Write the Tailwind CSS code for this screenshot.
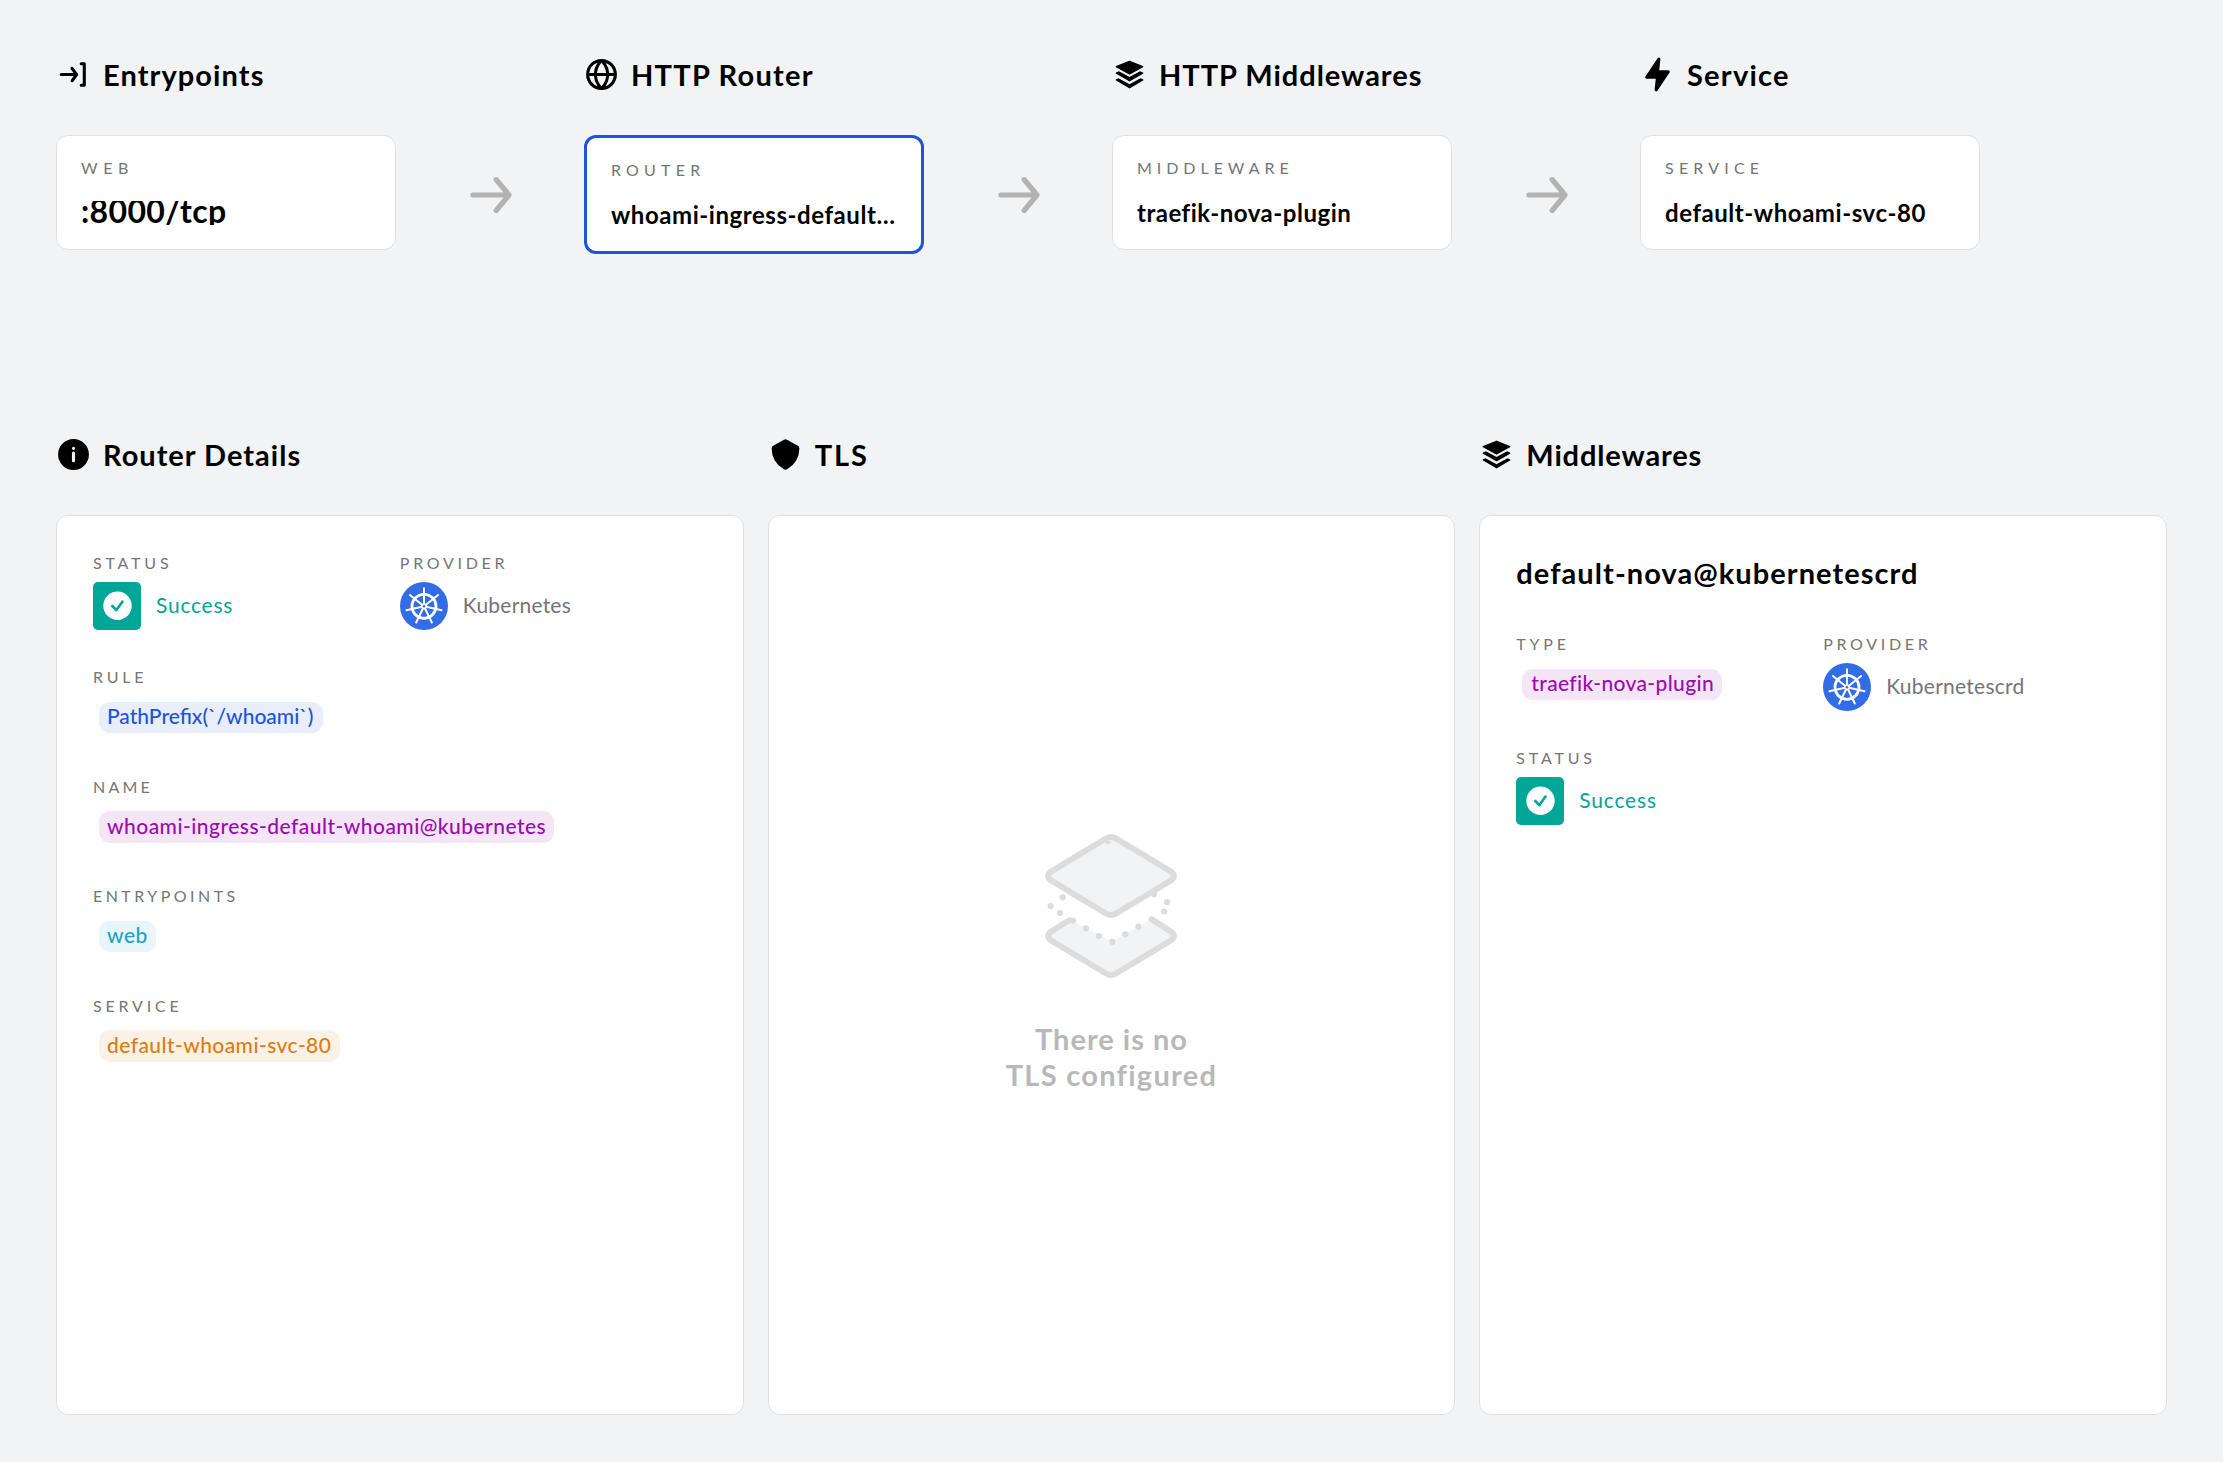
<!DOCTYPE html>
<html lang="en">
<head>
<meta charset="utf-8">
<title>Router whoami-ingress-default-whoami@kubernetes</title>
<script src="https://cdn.jsdelivr.net/npm/@tailwindcss/browser@4"></script>
</head>
<body class="bg-[#f1f3f5] font-['Lato','Liberation_Sans',sans-serif] text-black">
<svg class="hidden">
  <symbol id="arrow" viewBox="0 0 24 24"><path d="M5 13h11.86l-3.63 4.36a1 1 0 0 0 1.54 1.28l5-6a1.19 1.19 0 0 0 .09-.15c0-.05.05-.08.07-.13A1 1 0 0 0 20 12a1 1 0 0 0-.07-.36c0-.05-.05-.08-.07-.13a1.19 1.19 0 0 0-.09-.15l-5-6A1 1 0 0 0 14 5a1 1 0 0 0-.64.23 1 1 0 0 0-.13 1.41L16.86 11H5a1 1 0 0 0 0 2z"/></symbol>
  <symbol id="layers" viewBox="0 0 24 24"><path d="M3.24 7.29l8.52 4.63a.51.51 0 0 0 .48 0l8.52-4.63a.44.44 0 0 0-.05-.81L12.19 3a.5.5 0 0 0-.38 0L3.29 6.48a.44.44 0 0 0-.05.81z"/><path d="M20.71 10.66l-1.83-.78-6.64 3.61a.51.51 0 0 1-.48 0L5.12 9.88l-1.83.78a.48.48 0 0 0 0 .85l8.52 4.9a.46.46 0 0 0 .48 0l8.52-4.9a.48.48 0 0 0-.1-.85z"/><path d="M20.71 15.1l-1.56-.68-6.91 3.76a.51.51 0 0 1-.48 0l-6.91-3.76-1.56.68a.49.49 0 0 0 0 .87l8.52 5a.51.51 0 0 0 .48 0l8.52-5a.49.49 0 0 0-.1-.87z"/></symbol>
  <symbol id="check" viewBox="0 0 48 48"><rect width="48" height="48" rx="5" fill="#00a697"/><circle cx="24.5" cy="23.7" r="14.2" fill="#fff"/><path d="M19.3 24l4 4.2 6.2-8.6" fill="none" stroke="#00a697" stroke-width="2.6" stroke-linecap="round" stroke-linejoin="round"/></symbol>
  <symbol id="k8s" viewBox="0 0 48 48"><circle cx="24" cy="24" r="24" fill="#326de6"/><g fill="none" stroke="#fff" stroke-linecap="round"><circle cx="24" cy="24.3" r="12" stroke-width="2.8"/><circle cx="24" cy="24.3" r="2.4" fill="#fff" stroke-width="1.4"/><g stroke-width="2"><path d="M24 21V6.3"/><path d="M24 21V6.3" transform="rotate(51.43 24 24.3)"/><path d="M24 21V6.3" transform="rotate(102.86 24 24.3)"/><path d="M24 21V6.3" transform="rotate(154.29 24 24.3)"/><path d="M24 21V6.3" transform="rotate(205.71 24 24.3)"/><path d="M24 21V6.3" transform="rotate(257.14 24 24.3)"/><path d="M24 21V6.3" transform="rotate(308.57 24 24.3)"/></g></g><circle cx="24" cy="24.3" r="1.3" fill="#326de6"/></symbol>
</svg>

<main class="flex h-[1462px] w-[2223px] flex-col pt-[56px] pr-[56px] pl-[56px]">
  <!-- Request flow -->
  <section class="grid grid-cols-[528px_528px_528px_1fr]">
    <div>
      <h2 class="flex h-9 items-center gap-[11px] text-[29px] leading-9 font-bold tracking-[1.08px]">
        <svg class="mt-px -ml-px size-[37px]" viewBox="0 0 24 24"><path d="M19 4h-2a1 1 0 0 0 0 2h1v12h-1a1 1 0 0 0 0 2h2a1 1 0 0 0 1-1V5a1 1 0 0 0-1-1z"/><path d="M11.8 7.4a1 1 0 0 0-1.6 1.2L12 11H4a1 1 0 0 0 0 2h8.09l-1.72 2.44a1 1 0 0 0 .24 1.4 1 1 0 0 0 .58.18 1 1 0 0 0 .81-.42l2.82-4a1 1 0 0 0 0-1.18z"/></svg>
        <span class="pt-0.5">Entrypoints</span>
      </h2>
      <div class="mt-[43px] flex items-start">
        <div class="h-[115px] w-[340px] rounded-xl border border-[#dfe0e2] bg-white px-6 pt-[22px]">
          <div class="h-5 text-base leading-5 tracking-[5.6px] text-[#757575]">WEB</div>
          <div class="mt-[23px] h-6 overflow-hidden text-[32px] leading-5 font-bold tracking-[.36px] whitespace-nowrap">:8000/tcp</div>
        </div>
        <svg class="mt-[29px] ml-[64px] size-[62px] fill-[#b2b2b2]"><use href="#arrow"/></svg>
      </div>
    </div>
    <div>
      <h2 class="flex h-9 items-center gap-[11px] text-[29px] leading-9 font-bold tracking-[1.25px]">
        <svg class="mt-px -ml-px size-[37px]" viewBox="0 0 24 24"><path d="M22 12A10 10 0 0 0 12 2a10 10 0 0 0 0 20 10 10 0 0 0 10-10zm-2.07-1H17a12.91 12.91 0 0 0-2.33-6.54A8 8 0 0 1 19.93 11zM9.08 13H15a11.44 11.44 0 0 1-3 6.61A11 11 0 0 1 9.08 13zm0-2A11.4 11.4 0 0 1 12 4.4a11.19 11.19 0 0 1 3 6.6zm.36-6.57A13.18 13.18 0 0 0 7.07 11h-3a8 8 0 0 1 5.37-6.57zM4.07 13h3a12.86 12.86 0 0 0 2.35 6.56A8 8 0 0 1 4.07 13zm10.55 6.55A13.14 13.14 0 0 0 17 13h2.95a8 8 0 0 1-5.33 6.55z"/></svg>
        <span class="pt-0.5">HTTP Router</span>
      </h2>
      <div class="mt-[43px] flex items-start">
        <div class="h-[119px] w-[340px] rounded-xl border-3 border-[#1e54d9] bg-white px-6 pt-[22px]">
          <div class="h-5 text-base leading-5 tracking-[5.2px] text-[#757575]">ROUTER</div>
          <div class="mt-6 h-6 text-2xl leading-[22px] font-bold tracking-[.56px] whitespace-nowrap">whoami-ingress-default…</div>
        </div>
        <svg class="mt-[29px] ml-[64px] size-[62px] fill-[#b2b2b2]"><use href="#arrow"/></svg>
      </div>
    </div>
    <div>
      <h2 class="flex h-9 items-center gap-[11px] text-[29px] leading-9 font-bold tracking-[.98px]">
        <svg class="mt-px -ml-px size-[37px]"><use href="#layers"/></svg>
        <span class="pt-0.5">HTTP Middlewares</span>
      </h2>
      <div class="mt-[43px] flex items-start">
        <div class="h-[115px] w-[340px] rounded-xl border border-[#dfe0e2] bg-white px-6 pt-[22px]">
          <div class="h-5 text-base leading-5 tracking-[4.95px] text-[#757575]">MIDDLEWARE</div>
          <div class="mt-6 h-6 text-2xl leading-[22px] font-bold tracking-[.52px] whitespace-nowrap">traefik-nova-plugin</div>
        </div>
        <svg class="mt-[29px] ml-[64px] size-[62px] fill-[#b2b2b2]"><use href="#arrow"/></svg>
      </div>
    </div>
    <div>
      <h2 class="flex h-9 items-center gap-[11px] text-[29px] leading-9 font-bold tracking-[1.25px]">
        <svg class="mt-px -ml-px size-[37px]" viewBox="0 0 24 24"><path d="M11.11 23a1 1 0 0 1-.34-.06 1 1 0 0 1-.65-1.05l.77-7.09H5a1 1 0 0 1-.83-1.56l7.89-11.8a1 1 0 0 1 1.17-.38 1 1 0 0 1 .65 1l-.77 7.14H19a1 1 0 0 1 .83 1.56l-7.89 11.8a1 1 0 0 1-.83.44z"/></svg>
        <span class="pt-0.5">Service</span>
      </h2>
      <div class="mt-[43px] flex items-start">
        <div class="h-[115px] w-[340px] rounded-xl border border-[#dfe0e2] bg-white px-6 pt-[22px]">
          <div class="h-5 text-base leading-5 tracking-[5.2px] text-[#757575]">SERVICE</div>
          <div class="mt-6 h-6 text-2xl leading-[22px] font-bold tracking-[.56px] whitespace-nowrap">default-whoami-svc-80</div>
        </div>
      </div>
    </div>
  </section>

  <!-- Details -->
  <section class="mt-[182px] grid grid-cols-3 gap-6">
    <div>
      <h2 class="flex h-9 items-center gap-[11px] text-[29px] leading-9 font-bold tracking-[1px]">
        <svg class="mt-px -ml-px size-[37px]" viewBox="0 0 24 24"><path d="M12 2a10 10 0 1 0 10 10A10 10 0 0 0 12 2zm1 14a1 1 0 0 1-2 0v-5a1 1 0 0 1 2 0zm-1-7a1 1 0 1 1 1-1 1 1 0 0 1-1 1z"/></svg>
        <span class="pt-0.5">Router Details</span>
      </h2>
      <div class="mt-[43px] h-[900px] rounded-xl border border-[#dfe0e2] bg-white px-9 pt-[37px] text-[21px]">
        <div class="grid grid-cols-2">
          <div>
            <div class="h-5 text-base leading-5 tracking-[3.8px] text-[#757575]">STATUS</div>
            <div class="mt-[9px] flex items-center gap-[15px]">
              <svg class="size-12"><use href="#check"/></svg>
              <span class="pb-0.5 leading-7 tracking-[.75px] text-[#00a697]">Success</span>
            </div>
          </div>
          <div>
            <div class="h-5 text-base leading-5 tracking-[3.7px] text-[#757575]">PROVIDER</div>
            <div class="mt-[9px] flex items-center gap-[15px]">
              <svg class="size-12"><use href="#k8s"/></svg>
              <span class="pb-0.5 leading-7 tracking-[.22px] text-[#757575]">Kubernetes</span>
            </div>
          </div>
        </div>
        <div class="mt-[37px] h-[109.67px]">
          <div class="h-5 text-base leading-5 tracking-[3.8px] text-[#757575]">RULE</div>
          <div class="mt-[15px] ml-1.5 h-[31px] w-[224px] rounded-[11px] bg-[#e8eefb] pl-2 leading-7 font-medium tracking-[0px] whitespace-nowrap text-[#1e54d9]">PathPrefix(`/whoami`)</div>
        </div>
        <div class="h-[109.67px]">
          <div class="h-5 text-base leading-5 tracking-[3.2px] text-[#757575]">NAME</div>
          <div class="mt-[14.5px] ml-1.5 h-[31.5px] w-[455px] rounded-[11px] bg-[#f4e5f7] pl-2 leading-[29px] font-medium tracking-[.46px] whitespace-nowrap text-[#9c0bb0]">whoami-ingress-default-whoami@kubernetes</div>
        </div>
        <div class="h-[109.67px]">
          <div class="h-5 text-base leading-5 tracking-[3.45px] text-[#757575]">ENTRYPOINTS</div>
          <div class="mt-[14.5px] ml-1.5 h-[31.5px] w-[57px] rounded-[11px] bg-[#e8f5fa] pl-2 leading-7 font-medium tracking-[.5px] whitespace-nowrap text-[#1fa2c4]">web</div>
        </div>
        <div class="h-[109.67px]">
          <div class="h-5 text-base leading-5 tracking-[3.8px] text-[#757575]">SERVICE</div>
          <div class="mt-[14px] ml-1.5 h-8 w-[241px] rounded-[11px] bg-[#fbf1e6] pl-2 leading-[30px] font-medium tracking-[.42px] whitespace-nowrap text-[#db7d11]">default-whoami-svc-80</div>
        </div>
      </div>
    </div>

    <div>
      <h2 class="flex h-9 items-center gap-[11px] text-[29px] leading-9 font-bold tracking-[2px]">
        <svg class="mt-px -ml-px size-[37px]" viewBox="0 0 24 24"><path d="M12 21.85a2 2 0 0 1-1-.25l-.3-.17A15.17 15.17 0 0 1 3 8.23v-.14a2 2 0 0 1 1-1.75l7-3.94a2 2 0 0 1 2 0l7 3.94a2 2 0 0 1 1 1.75v.14a15.17 15.17 0 0 1-7.72 13.2l-.3.17a2 2 0 0 1-.98.25z"/></svg>
        <span class="pt-0.5">TLS</span>
      </h2>
      <div class="mt-[43px] flex h-[900px] flex-col items-center justify-center rounded-xl border border-[#dfe0e2] bg-white pb-[3px]">
        <svg class="h-36 w-[132px] overflow-visible" viewBox="0 0 132 144">
          <path d="M24.3 85.3L41 94.3 67.3 107.7 93.3 92.7 106.7 84.7 125 97Q132 102 125 107L71 139.5Q66 142.5 61 139.5L7 107Q0 102 7 97Z" fill="#f1f3f5"/>
          <g stroke="#dcdcdc" stroke-width="6" stroke-linecap="round" stroke-linejoin="round">
            <path d="M61 4.5Q66 1.5 71 4.5L125 37Q133 42 125 47L71 79.5Q66 82.5 61 79.5L7 47Q-1 42 7 37Z" fill="#f1f3f5"/>
            <path d="M24.3 86.3L7 97Q-1 102 7 107L61 139.5Q66 142.5 71 139.5L125 107Q133 102 125 97L106.7 85.2" fill="none"/>
          </g>
          <g fill="#dcdcdc"><circle cx="17.7" cy="63.3" r="3.1"/><circle cx="5.7" cy="72" r="3.1"/><circle cx="15" cy="79" r="3.1"/><circle cx="28" cy="86.5" r="3.1"/><circle cx="41" cy="94.3" r="3.1"/><circle cx="54" cy="102" r="3.1"/><circle cx="67.3" cy="107.7" r="3.1"/><circle cx="80.3" cy="100.3" r="3.1"/><circle cx="93.3" cy="92.7" r="3.1"/><circle cx="119.3" cy="77.3" r="3.1"/><circle cx="122" cy="68" r="3.1"/><circle cx="109" cy="60.3" r="3.1"/><path d="M60 6l2 5 5-3z"/></g>
        </svg>
        <p class="mt-[43px] text-center text-[29px] leading-9 font-bold text-[#b8b8b8]"><span class="tracking-[1px]">There is no</span><br><span class="tracking-[1.28px]">TLS configured</span></p>
      </div>
    </div>

    <div>
      <h2 class="flex h-9 items-center gap-[11px] text-[29px] leading-9 font-bold tracking-[.86px]">
        <svg class="mt-px -ml-px size-[37px]"><use href="#layers"/></svg>
        <span class="pt-0.5">Middlewares</span>
      </h2>
      <div class="mt-[43px] h-[900px] rounded-xl border border-[#dfe0e2] bg-white px-9 pt-[37px] text-[21px]">
        <h3 class="h-[38px] text-[29px] leading-[40px] font-bold tracking-[1.06px]">default-nova@kubernetescrd</h3>
        <div class="mt-[43px] grid grid-cols-2">
          <div>
            <div class="h-5 text-base leading-5 tracking-[3.8px] text-[#757575]">TYPE</div>
            <div class="mt-[15px] ml-1.5 h-[31px] w-[200px] rounded-[11px] bg-[#f4e5f7] pl-[9px] leading-7 font-medium tracking-[.35px] whitespace-nowrap text-[#9c0bb0]">traefik-nova-plugin</div>
          </div>
          <div>
            <div class="h-5 text-base leading-5 tracking-[3.7px] text-[#757575]">PROVIDER</div>
            <div class="mt-[9px] flex items-center gap-[15px]">
              <svg class="size-12"><use href="#k8s"/></svg>
              <span class="pb-0.5 leading-7 tracking-[.27px] text-[#757575]">Kubernetescrd</span>
            </div>
          </div>
        </div>
        <div class="mt-[37px]">
          <div class="h-5 text-base leading-5 tracking-[3.8px] text-[#757575]">STATUS</div>
          <div class="mt-[9px] flex items-center gap-[15px]">
            <svg class="size-12"><use href="#check"/></svg>
            <span class="pb-0.5 leading-7 tracking-[.8px] text-[#00a697]">Success</span>
          </div>
        </div>
      </div>
    </div>
  </section>
</main>
</body>
</html>
